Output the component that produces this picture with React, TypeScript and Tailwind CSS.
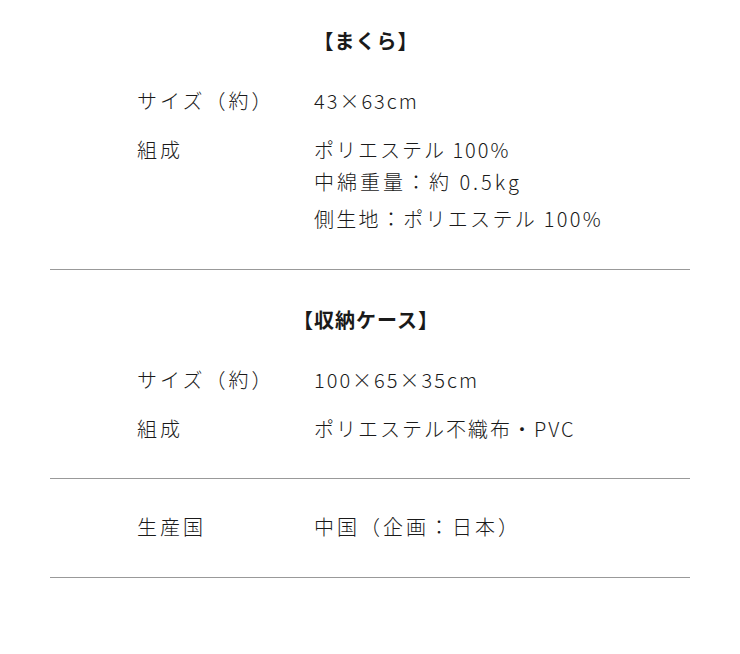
import React from "react";

const font = { fontFamily: '"Noto Sans CJK JP", "Noto Sans", sans-serif' };

function Row({ label, children, className = "" }: { label: string; children: React.ReactNode; className?: string }) {
  return (
    <div className={`flex ${className}`}>
      <div className="w-[177px] shrink-0 tracking-[3px]">{label}</div>
      <div className="flex flex-col">{children}</div>
    </div>
  );
}

export default function App() {
  return (
    <div className="w-[740px] h-[654px] bg-white text-[#1a1a1a] font-light text-[20px] leading-[32px] tracking-[2px]" style={font}>
      <div className="w-[640px] ml-[50px]">
        <div className="pt-[25px] pb-[34px] border-b border-[#999]">
          <div className="text-center font-bold tracking-[1px] pr-[8px]">【まくら】</div>
          <div className="mt-[28px] pl-[87px]">
            <Row label="サイズ（約）">
              <span>43×63cm</span>
            </Row>
            <Row label="組成" className="mt-[17px]">
              <span>ポリエステル 100%</span>
              <span className="tracking-[3px]">中綿重量：約 0.5kg</span>
              <span className="mt-[5px] tracking-[2.3px]">側生地：ポリエステル 100%</span>
            </Row>
          </div>
        </div>
        <div className="pt-[34px] pb-[33px] border-b border-[#999]">
          <div className="text-center font-bold tracking-[1px] pr-[8px]">【収納ケース】</div>
          <div className="mt-[28px] pl-[87px]">
            <Row label="サイズ（約）">
              <span>100×65×35cm</span>
            </Row>
            <Row label="組成" className="mt-[17px]">
              <span>ポリエステル不織布・PVC</span>
            </Row>
          </div>
        </div>
        <div className="pt-[32px] pb-[34px] border-b border-[#999]">
          <div className="pl-[87px]">
            <Row label="生産国">
              <span className="tracking-[3px]">中国（企画：日本）</span>
            </Row>
          </div>
        </div>
      </div>
    </div>
  );
}
